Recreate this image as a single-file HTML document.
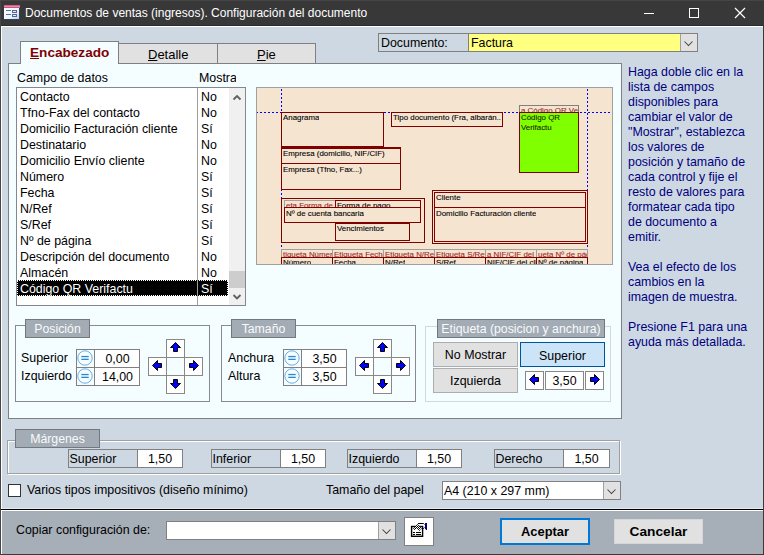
<!DOCTYPE html>
<html><head><meta charset="utf-8">
<style>
*{box-sizing:border-box;margin:0;padding:0}
html,body{width:764px;height:555px;overflow:hidden;background:#3a3a3a}
body{position:relative;font-family:"Liberation Sans",sans-serif;font-size:12.4px;color:#000}
.a{position:absolute}
.t{position:absolute;white-space:nowrap;line-height:16px}
.bx{position:absolute;border:1px solid #808080}
.gl{position:absolute;background:#a3acb5;border:1px solid #72787e;color:#f8fafc;font-size:13px;line-height:16px;text-align:center;white-space:nowrap}
.pt{position:absolute;white-space:nowrap;font-size:7.9px;line-height:10px;color:#000;overflow:hidden;-webkit-text-stroke:0.1px currentColor}
.dv{position:absolute;width:1px;background:repeating-linear-gradient(to bottom,#0000ff 0 2px,transparent 2px 4px)}
.dh{position:absolute;height:1px;background:repeating-linear-gradient(to right,#0000ff 0 2px,transparent 2px 4px)}
</style></head><body>
<div class="a" style="left:0;top:0;width:764px;height:25px;background:#383838"></div>
<div class="a" style="left:0;top:25px;width:764px;height:1px;background:#2a2a2a"></div>
<div class="a" style="left:1px;top:26px;width:762px;height:528px;background:#fff"></div>
<div class="a" style="left:2px;top:27px;width:761px;height:481px;background:#ced8e2"></div>
<div class="a" style="left:2px;top:508px;width:761px;height:1px;background:#e4ecf3"></div>
<div class="a" style="left:1px;top:509px;width:762px;height:1px;background:#000"></div>
<div class="a" style="left:1px;top:510px;width:762px;height:1px;background:#fff"></div>
<div class="a" style="left:2px;top:511px;width:761px;height:43px;background:#a6aeb7"></div>
<svg class="a" style="left:0;top:0" width="24" height="24" viewBox="0 0 24 24"><defs><linearGradient id="ig" x1="0" y1="0" x2="1" y2="1"><stop offset="0" stop-color="#fff"/><stop offset="0.6" stop-color="#eef3fb"/><stop offset="1" stop-color="#b9cbe8"/></linearGradient><linearGradient id="pk" x1="0" y1="0" x2="0" y2="1"><stop offset="0" stop-color="#c84a78"/><stop offset="0.45" stop-color="#e890b0"/><stop offset="1" stop-color="#c0406c"/></linearGradient></defs><rect x="4" y="5" width="16" height="15" fill="url(#ig)"/><rect x="4" y="5" width="16" height="3" fill="url(#pk)"/><rect x="19" y="8" width="1" height="12" fill="#2d4468"/><rect x="4" y="19" width="16" height="1" fill="#2d4468"/><rect x="6" y="10" width="5" height="1" fill="#5873a3"/><rect x="6" y="14" width="5" height="1" fill="#5873a3"/><rect x="12" y="10" width="5" height="3" fill="#53698f"/><rect x="13" y="11" width="3" height="1" fill="#e8eef8"/><rect x="12" y="14" width="5" height="3" fill="#53698f"/><rect x="13" y="15" width="3" height="1" fill="#e8eef8"/></svg>
<div class="a" style="left:0;top:0;width:764px;height:1px;background:#454545"></div>
<div class="a" style="left:0;top:0;width:1px;height:555px;background:#454545"></div>
<div class="t" style="left:25px;top:5px;color:#fff;font-size:12px">Documentos de ventas (ingresos). Configuración del documento</div>
<div class="a" style="left:644px;top:13px;width:10px;height:1px;background:#fff"></div>
<div class="a" style="left:689px;top:8px;width:10px;height:10px;border:1px solid #fff"></div>
<svg class="a" style="left:734px;top:7px" width="12" height="12" viewBox="0 0 12 12"><path d="M1 1L11 11M11 1L1 11" stroke="#fff" stroke-width="1.2"/></svg>
<div class="bx" style="left:378px;top:33px;width:91px;height:19px;background:#ced8e2"></div>
<div class="t" style="left:381px;top:35px">Documento:</div>
<div class="bx" style="left:468px;top:33px;width:230px;height:19px;background:#ffff80"></div>
<div class="t" style="left:471px;top:35px">Factura</div>
<div class="a" style="left:680px;top:34px;width:17px;height:17px;background:#e1e1e1;border-left:1px solid #a0a0a0"></div>
<svg class="a" style="left:683px;top:39px" width="11" height="8" viewBox="0 0 11 8"><path d="M1.5 2.5L5.5 6.5L9.5 2.5" stroke="#404040" stroke-width="1.05" fill="none"/></svg>
<div class="bx" style="left:118px;top:43px;width:100px;height:21px;background:#e1e1e1;border-bottom:0"></div>
<div class="bx" style="left:217px;top:43px;width:99px;height:21px;background:#e1e1e1;border-bottom:0"></div>
<div class="t" style="left:148px;top:47px;font-size:13px"><u>D</u>etalle</div>
<div class="t" style="left:257px;top:47px;font-size:13px"><u>P</u>ie</div>
<div class="bx" style="left:8px;top:63px;width:614px;height:356px;background:#f4fdff"></div>
<div class="bx" style="left:20px;top:41px;width:99px;height:23px;background:#f4fdff;border-bottom:0"></div>
<div class="t" style="left:30px;top:45px;font-size:13.6px;font-weight:bold;color:#800000"><u>E</u>ncabezado</div>
<div class="t" style="left:17px;top:70px">Campo de datos</div>
<div class="t" style="left:199px;top:70px;width:37px;overflow:hidden">Mostrar</div>
<div class="a" style="left:16px;top:87px;width:230px;height:219px;background:#fff;border:1px solid #828790"></div>
<div class="a" style="left:229px;top:88px;width:16px;height:217px;background:#f0f0f0"></div>
<div class="a" style="left:229px;top:271px;width:16px;height:17px;background:#cdcdcd"></div>
<svg class="a" style="left:232px;top:93px" width="10" height="8" viewBox="0 0 10 8"><path d="M1.5 6.5L5 3L8.5 6.5" stroke="#606060" stroke-width="1.8" fill="none"/></svg>
<svg class="a" style="left:232px;top:293px" width="10" height="8" viewBox="0 0 10 8"><path d="M1.5 2L5 5.5L8.5 2" stroke="#606060" stroke-width="1.8" fill="none"/></svg>
<div class="t" style="left:20px;top:89px;color:#000">Contacto</div><div class="t" style="left:201px;top:89px;color:#000">No</div>
<div class="t" style="left:20px;top:105px;color:#000">Tfno-Fax del contacto</div><div class="t" style="left:201px;top:105px;color:#000">No</div>
<div class="t" style="left:20px;top:121px;color:#000">Domicilio Facturación cliente</div><div class="t" style="left:201px;top:121px;color:#000">Sí</div>
<div class="t" style="left:20px;top:137px;color:#000">Destinatario</div><div class="t" style="left:201px;top:137px;color:#000">No</div>
<div class="t" style="left:20px;top:153px;color:#000">Domicilio Envío cliente</div><div class="t" style="left:201px;top:153px;color:#000">No</div>
<div class="t" style="left:20px;top:169px;color:#000">Número</div><div class="t" style="left:201px;top:169px;color:#000">Sí</div>
<div class="t" style="left:20px;top:185px;color:#000">Fecha</div><div class="t" style="left:201px;top:185px;color:#000">Sí</div>
<div class="t" style="left:20px;top:201px;color:#000">N/Ref</div><div class="t" style="left:201px;top:201px;color:#000">Sí</div>
<div class="t" style="left:20px;top:217px;color:#000">S/Ref</div><div class="t" style="left:201px;top:217px;color:#000">Sí</div>
<div class="t" style="left:20px;top:233px;color:#000">Nº de página</div><div class="t" style="left:201px;top:233px;color:#000">Sí</div>
<div class="t" style="left:20px;top:249px;color:#000">Descripción del documento</div><div class="t" style="left:201px;top:249px;color:#000">No</div>
<div class="t" style="left:20px;top:265px;color:#000">Almacén</div><div class="t" style="left:201px;top:265px;color:#000">No</div>
<div class="a" style="left:17px;top:280px;width:211px;height:16px;background:#000;border:1px dotted #fff"></div>
<div class="t" style="left:20px;top:281px;color:#fff">Código QR Verifactu</div><div class="t" style="left:201px;top:281px;color:#fff">Sí</div>
<div class="a" style="left:197px;top:88px;width:1px;height:217px;background:#a0a0a0"></div>
<div class="a" style="left:256px;top:87px;width:357px;height:178px;border:1px solid #a0a0a0;background:#f5e4d0;overflow:hidden">
<div class="a" style="left:-1px;top:-1px;width:357px;height:178px">
<div class="dv" style="left:25px;top:2px;height:178px"></div>
<div class="dv" style="left:331px;top:2px;height:178px"></div>
<div class="dh" style="left:0;top:25px;width:357px"></div>
<div class="a" style="left:25px;top:25px;width:103px;height:35px;border:1px solid #800000;"></div>
<div class="pt" style="left:27px;top:26.299999999999997px;color:#000;">Anagrama</div>
<div class="a" style="left:25px;top:60px;width:120px;height:17px;border:1px solid #800000;"></div>
<div class="a" style="left:25px;top:61px;width:120px;height:1px;background:#800000"></div>
<div class="pt" style="left:27px;top:62px;color:#000;">Empresa (domicilio, NIF/CIF)</div>
<div class="a" style="left:25px;top:76px;width:120px;height:27px;border:1px solid #800000;"></div>
<div class="pt" style="left:27px;top:77.6px;color:#000;">Empresa (Tfno, Fax...)</div>
<div class="a" style="left:135px;top:25px;width:112px;height:15px;border:1px solid #800000;"></div>
<div class="pt" style="left:137px;top:26.400000000000006px;color:#000;width:108px;">Tipo documento (Fra, albarán..</div>
<div class="a" style="left:263px;top:18px;width:60px;height:8px;border:1px solid #808080;"></div>
<div class="a" style="left:264px;top:19px;width:58px;height:6px;overflow:hidden"><div class="pt" style="left:1px;top:0px;color:#a02828">a Código QR Verifactu</div></div>
<div class="a" style="left:263px;top:25px;width:60px;height:61px;border:1px solid #800000;background:#80ff00;"></div>
<div class="pt" style="left:265px;top:26px;color:#1a2a00;">Código QR</div>
<div class="pt" style="left:265px;top:36px;color:#1a2a00;">Verifactu</div>
<div class="a" style="left:25px;top:111px;width:144px;height:45px;border:1px solid #800000;"></div>
<div class="a" style="left:28px;top:113px;width:52px;height:11px;border:1px solid #a0a0a0;"></div>
<div class="a" style="left:29px;top:114px;width:50px;height:6px;overflow:hidden"><div class="pt" style="left:1px;top:-0.5px;color:#a02828">eta Forma de pago</div></div>
<div class="a" style="left:79px;top:113px;width:86px;height:11px;border:1px solid #800000;"></div>
<div class="a" style="left:80px;top:114px;width:84px;height:6px;overflow:hidden"><div class="pt" style="left:1px;top:-0.5px">Forma de pago</div></div>
<div class="a" style="left:28px;top:120px;width:137px;height:16px;background:#f5e4d0;border:1px solid #800000"></div>
<div class="pt" style="left:30px;top:122px;color:#000;">Nº de cuenta bancaria</div>
<div class="a" style="left:79px;top:136px;width:75px;height:18px;border:1px solid #800000;"></div>
<div class="pt" style="left:81px;top:136.5px;color:#000;">Vencimientos</div>
<div class="a" style="left:176px;top:103px;width:156px;height:54px;border:1px solid #800000;"></div>
<div class="a" style="left:178px;top:105px;width:152px;height:50px;border:1px solid #800000;"></div>
<div class="a" style="left:178px;top:120px;width:152px;height:1px;background:#800000"></div>
<div class="pt" style="left:180px;top:105.69999999999999px;color:#000;">Cliente</div>
<div class="pt" style="left:180px;top:121.80000000000001px;color:#000;">Domicilio Facturación cliente</div>
<div class="a" style="left:25px;top:162px;width:52px;height:9px;border:1px solid #a0a0a0;"></div>
<div class="a" style="left:26px;top:163px;width:50px;height:7px;overflow:hidden"><div class="pt" style="left:1px;top:0px;color:#a02828">tiqueta Número</div></div>
<div class="a" style="left:25px;top:170px;width:52px;height:12px;border:1px solid #800000;"></div>
<div class="a" style="left:26px;top:171px;width:50px;height:10px;overflow:hidden"><div class="pt" style="left:1px;top:0px">Número</div></div>
<div class="a" style="left:76px;top:162px;width:52px;height:9px;border:1px solid #a0a0a0;"></div>
<div class="a" style="left:77px;top:163px;width:50px;height:7px;overflow:hidden"><div class="pt" style="left:1px;top:0px;color:#a02828">Etiqueta Fecha</div></div>
<div class="a" style="left:76px;top:170px;width:52px;height:12px;border:1px solid #800000;"></div>
<div class="a" style="left:77px;top:171px;width:50px;height:10px;overflow:hidden"><div class="pt" style="left:1px;top:0px">Fecha</div></div>
<div class="a" style="left:127px;top:162px;width:52px;height:9px;border:1px solid #a0a0a0;"></div>
<div class="a" style="left:128px;top:163px;width:50px;height:7px;overflow:hidden"><div class="pt" style="left:1px;top:0px;color:#a02828">Etiqueta N/Ref</div></div>
<div class="a" style="left:127px;top:170px;width:52px;height:12px;border:1px solid #800000;"></div>
<div class="a" style="left:128px;top:171px;width:50px;height:10px;overflow:hidden"><div class="pt" style="left:1px;top:0px">N/Ref</div></div>
<div class="a" style="left:178px;top:162px;width:52px;height:9px;border:1px solid #a0a0a0;"></div>
<div class="a" style="left:179px;top:163px;width:50px;height:7px;overflow:hidden"><div class="pt" style="left:1px;top:0px;color:#a02828">Etiqueta S/Ref</div></div>
<div class="a" style="left:178px;top:170px;width:52px;height:12px;border:1px solid #800000;"></div>
<div class="a" style="left:179px;top:171px;width:50px;height:10px;overflow:hidden"><div class="pt" style="left:1px;top:0px">S/Ref</div></div>
<div class="a" style="left:229px;top:162px;width:52px;height:9px;border:1px solid #a0a0a0;"></div>
<div class="a" style="left:230px;top:163px;width:50px;height:7px;overflow:hidden"><div class="pt" style="left:1px;top:0px;color:#a02828">a NIF/CIF del cliente</div></div>
<div class="a" style="left:229px;top:170px;width:52px;height:12px;border:1px solid #800000;"></div>
<div class="a" style="left:230px;top:171px;width:50px;height:10px;overflow:hidden"><div class="pt" style="left:1px;top:0px">NIF/CIF del cliente</div></div>
<div class="a" style="left:280px;top:162px;width:52px;height:9px;border:1px solid #a0a0a0;"></div>
<div class="a" style="left:281px;top:163px;width:50px;height:7px;overflow:hidden"><div class="pt" style="left:1px;top:0px;color:#a02828">ueta Nº de página</div></div>
<div class="a" style="left:280px;top:170px;width:52px;height:12px;border:1px solid #800000;"></div>
<div class="a" style="left:281px;top:171px;width:50px;height:10px;overflow:hidden"><div class="pt" style="left:1px;top:0px">Nº de página</div></div>
</div></div>
<div class="a" style="left:628px;top:65px;color:#000080;line-height:15px;white-space:pre">Haga doble clic en la
lista de campos
disponibles para
cambiar el valor de
&quot;Mostrar&quot;, establezca
los valores de
posición y tamaño de
cada control y fije el
resto de valores para
formatear cada tipo
de documento a
emitir.

Vea el efecto de los
cambios en la
imagen de muestra.

Presione F1 para una
ayuda más detallada.</div>
<div class="a" style="left:15px;top:325px;width:195px;height:77px;border:1px solid #8a8a8a"></div>
<div class="gl" style="left:25px;top:319px;width:65px;height:19px;line-height:19px;font-size:12.3px">Posición</div>
<div class="t" style="left:21px;top:350px">Superior</div>
<div class="t" style="left:21px;top:368px">Izquierdo</div>
<div class="a" style="left:76px;top:349px;width:64px;height:37px;border:1px solid #808080;background:#fff"></div><div class="a" style="left:77px;top:350px;width:17px;height:35px;background:#f4fdff"></div><div class="a" style="left:94px;top:349px;width:1px;height:37px;background:#808080"></div><div class="a" style="left:76px;top:367px;width:64px;height:1px;background:#808080"></div><svg class="a" style="left:76px;top:349px" width="18" height="18" viewBox="0 0 18 18"><circle cx="9" cy="9" r="7.2" fill="none" stroke="#6aaee8" stroke-width="1"/><rect x="5.3" y="6.9" width="7.4" height="1.3" fill="#2a88d8"/><rect x="5.3" y="9.7" width="7.4" height="1.3" fill="#2a88d8"/></svg><svg class="a" style="left:76px;top:367px" width="18" height="18" viewBox="0 0 18 18"><circle cx="9" cy="9" r="7.2" fill="none" stroke="#6aaee8" stroke-width="1"/><rect x="5.3" y="6.9" width="7.4" height="1.3" fill="#2a88d8"/><rect x="5.3" y="9.7" width="7.4" height="1.3" fill="#2a88d8"/></svg><div class="t" style="left:95px;top:351px;width:45px;text-align:center">0,00</div><div class="t" style="left:95px;top:369px;width:45px;text-align:center">14,00</div>
<div class="a" style="left:166px;top:339px;width:19px;height:19px;background:#fff;border:1px solid #888"></div><svg class="a" style="left:166px;top:339px" width="19" height="19" viewBox="0 0 19 19"><path d="M9.5 3.5L14.5 8.5L11.5 8.5L11.5 12.5L7.5 12.5L7.5 8.5L4.5 8.5Z" fill="#0000ff" stroke="#000" stroke-width="1"/></svg><div class="a" style="left:148px;top:357px;width:19px;height:19px;background:#fff;border:1px solid #888"></div><svg class="a" style="left:148px;top:357px" width="19" height="19" viewBox="0 0 19 19"><path d="M4.5 8.5L9.5 3.5L9.5 6.5L13.5 6.5L13.5 10.5L9.5 10.5L9.5 13.5Z" fill="#0000ff" stroke="#000" stroke-width="1"/></svg><div class="a" style="left:184px;top:357px;width:19px;height:19px;background:#fff;border:1px solid #888"></div><svg class="a" style="left:184px;top:357px" width="19" height="19" viewBox="0 0 19 19"><path d="M14.5 8.5L9.5 3.5L9.5 6.5L5.5 6.5L5.5 10.5L9.5 10.5L9.5 13.5Z" fill="#0000ff" stroke="#000" stroke-width="1"/></svg><div class="a" style="left:166px;top:375px;width:19px;height:19px;background:#fff;border:1px solid #888"></div><svg class="a" style="left:166px;top:375px" width="19" height="19" viewBox="0 0 19 19"><path d="M7.5 4.5L11.5 4.5L11.5 8.5L14.5 8.5L9.5 13.5L4.5 8.5L7.5 8.5Z" fill="#0000ff" stroke="#000" stroke-width="1"/></svg>
<div class="a" style="left:221px;top:325px;width:195px;height:77px;border:1px solid #8a8a8a"></div>
<div class="gl" style="left:231px;top:319px;width:65px;height:19px;line-height:19px;font-size:12.3px">Tamaño</div>
<div class="t" style="left:228px;top:350px">Anchura</div>
<div class="t" style="left:228px;top:368px">Altura</div>
<div class="a" style="left:283px;top:349px;width:64px;height:37px;border:1px solid #808080;background:#fff"></div><div class="a" style="left:284px;top:350px;width:17px;height:35px;background:#f4fdff"></div><div class="a" style="left:301px;top:349px;width:1px;height:37px;background:#808080"></div><div class="a" style="left:283px;top:367px;width:64px;height:1px;background:#808080"></div><svg class="a" style="left:283px;top:349px" width="18" height="18" viewBox="0 0 18 18"><circle cx="9" cy="9" r="7.2" fill="none" stroke="#6aaee8" stroke-width="1"/><rect x="5.3" y="6.9" width="7.4" height="1.3" fill="#2a88d8"/><rect x="5.3" y="9.7" width="7.4" height="1.3" fill="#2a88d8"/></svg><svg class="a" style="left:283px;top:367px" width="18" height="18" viewBox="0 0 18 18"><circle cx="9" cy="9" r="7.2" fill="none" stroke="#6aaee8" stroke-width="1"/><rect x="5.3" y="6.9" width="7.4" height="1.3" fill="#2a88d8"/><rect x="5.3" y="9.7" width="7.4" height="1.3" fill="#2a88d8"/></svg><div class="t" style="left:302px;top:351px;width:45px;text-align:center">3,50</div><div class="t" style="left:302px;top:369px;width:45px;text-align:center">3,50</div>
<div class="a" style="left:373px;top:339px;width:19px;height:19px;background:#fff;border:1px solid #888"></div><svg class="a" style="left:373px;top:339px" width="19" height="19" viewBox="0 0 19 19"><path d="M9.5 3.5L14.5 8.5L11.5 8.5L11.5 12.5L7.5 12.5L7.5 8.5L4.5 8.5Z" fill="#0000ff" stroke="#000" stroke-width="1"/></svg><div class="a" style="left:355px;top:357px;width:19px;height:19px;background:#fff;border:1px solid #888"></div><svg class="a" style="left:355px;top:357px" width="19" height="19" viewBox="0 0 19 19"><path d="M4.5 8.5L9.5 3.5L9.5 6.5L13.5 6.5L13.5 10.5L9.5 10.5L9.5 13.5Z" fill="#0000ff" stroke="#000" stroke-width="1"/></svg><div class="a" style="left:391px;top:357px;width:19px;height:19px;background:#fff;border:1px solid #888"></div><svg class="a" style="left:391px;top:357px" width="19" height="19" viewBox="0 0 19 19"><path d="M14.5 8.5L9.5 3.5L9.5 6.5L5.5 6.5L5.5 10.5L9.5 10.5L9.5 13.5Z" fill="#0000ff" stroke="#000" stroke-width="1"/></svg><div class="a" style="left:373px;top:375px;width:19px;height:19px;background:#fff;border:1px solid #888"></div><svg class="a" style="left:373px;top:375px" width="19" height="19" viewBox="0 0 19 19"><path d="M7.5 4.5L11.5 4.5L11.5 8.5L14.5 8.5L9.5 13.5L4.5 8.5L7.5 8.5Z" fill="#0000ff" stroke="#000" stroke-width="1"/></svg>
<div class="a" style="left:425px;top:326px;width:186px;height:76px;border:1px solid #d4d8dc"></div>
<div class="gl" style="left:437px;top:319px;width:168px;height:19px;line-height:19px;font-size:12.3px">Etiqueta (posicion y anchura)</div>
<div class="a" style="left:433px;top:342px;width:85px;height:25px;background:#e1e1e1;border:1px solid #adadad"></div>
<div class="t" style="left:433px;top:347px;width:85px;text-align:center">No Mostrar</div>
<div class="a" style="left:520px;top:342px;width:85px;height:25px;background:#cce4f7;border:1px solid #005499"></div>
<div class="t" style="left:520px;top:348px;width:85px;text-align:center">Superior</div>
<div class="a" style="left:433px;top:368px;width:85px;height:25px;background:#e1e1e1;border:1px solid #adadad"></div>
<div class="t" style="left:433px;top:373px;width:85px;text-align:center">Izquierda</div>
<div class="a" style="left:525px;top:371px;width:19px;height:19px;background:#fff;border:1px solid #888"></div><svg class="a" style="left:525px;top:371px" width="19" height="19" viewBox="0 0 19 19"><path d="M4.5 8.5L9.5 3.5L9.5 6.5L13.5 6.5L13.5 10.5L9.5 10.5L9.5 13.5Z" fill="#0000ff" stroke="#000" stroke-width="1"/></svg>
<div class="a" style="left:545px;top:371px;width:39px;height:19px;background:#fff;border:1px solid #888"></div>
<div class="t" style="left:545px;top:373px;width:39px;text-align:center">3,50</div>
<div class="a" style="left:585px;top:371px;width:19px;height:19px;background:#fff;border:1px solid #888"></div><svg class="a" style="left:585px;top:371px" width="19" height="19" viewBox="0 0 19 19"><path d="M14.5 8.5L9.5 3.5L9.5 6.5L5.5 6.5L5.5 10.5L9.5 10.5L9.5 13.5Z" fill="#0000ff" stroke="#000" stroke-width="1"/></svg>
<div class="a" style="left:8px;top:441px;width:613px;height:34px;border:1px solid #fff"></div>
<div class="a" style="left:7px;top:440px;width:613px;height:34px;border:1px solid #a0a0a0"></div>
<div class="gl" style="left:15px;top:429px;width:85px;height:19px;line-height:19px;font-size:12.3px">Márgenes</div>
<div class="a" style="left:68px;top:449px;width:70px;height:19px;border:1px solid #808080;background:#ced8e2"></div><div class="t" style="left:69.5px;top:451px">Superior</div><div class="a" style="left:137px;top:449px;width:46px;height:19px;border:1px solid #808080;background:#fff"></div><div class="t" style="left:137px;top:451px;width:46px;text-align:center">1,50</div>
<div class="a" style="left:211px;top:449px;width:70px;height:19px;border:1px solid #808080;background:#ced8e2"></div><div class="t" style="left:212.5px;top:451px">Inferior</div><div class="a" style="left:280px;top:449px;width:46px;height:19px;border:1px solid #808080;background:#fff"></div><div class="t" style="left:280px;top:451px;width:46px;text-align:center">1,50</div>
<div class="a" style="left:347px;top:449px;width:70px;height:19px;border:1px solid #808080;background:#ced8e2"></div><div class="t" style="left:348.5px;top:451px">Izquierdo</div><div class="a" style="left:416px;top:449px;width:46px;height:19px;border:1px solid #808080;background:#fff"></div><div class="t" style="left:416px;top:451px;width:46px;text-align:center">1,50</div>
<div class="a" style="left:494px;top:449px;width:70px;height:19px;border:1px solid #808080;background:#ced8e2"></div><div class="t" style="left:495.5px;top:451px">Derecho</div><div class="a" style="left:563px;top:449px;width:47px;height:19px;border:1px solid #808080;background:#fff"></div><div class="t" style="left:563px;top:451px;width:47px;text-align:center">1,50</div>
<div class="a" style="left:8px;top:484px;width:13px;height:13px;border:1px solid #333;background:#fff"></div>
<div class="t" style="left:27px;top:482px">Varios tipos impositivos (diseño mínimo)</div>
<div class="t" style="left:326px;top:482px">Tamaño del papel</div>
<div class="a" style="left:442px;top:481px;width:179px;height:19px;border:1px solid #808080;background:#fff"></div>
<div class="t" style="left:444px;top:483px">A4 (210 x 297 mm)</div>
<div class="a" style="left:603px;top:482px;width:17px;height:17px;background:#e1e1e1;border-left:1px solid #a0a0a0"></div>
<svg class="a" style="left:606px;top:487px" width="11" height="8" viewBox="0 0 11 8"><path d="M1.5 2.5L5.5 6.5L9.5 2.5" stroke="#404040" stroke-width="1.05" fill="none"/></svg>
<div class="t" style="left:16px;top:522px">Copiar configuración de:</div>
<div class="a" style="left:166px;top:521px;width:230px;height:19px;border:1px solid #808080;background:#fff"></div>
<div class="a" style="left:378px;top:522px;width:17px;height:17px;background:#e1e1e1;border-left:1px solid #a0a0a0"></div>
<svg class="a" style="left:381px;top:527px" width="11" height="8" viewBox="0 0 11 8"><path d="M1.5 2.5L5.5 6.5L9.5 2.5" stroke="#404040" stroke-width="1.05" fill="none"/></svg>
<div class="a" style="left:404px;top:517px;width:30px;height:29px;border:1px solid #808080;background:#fff"></div>
<svg class="a" style="left:409px;top:520px" width="20" height="20" viewBox="0 0 20 20"><defs><pattern id="ck" width="2" height="2" patternUnits="userSpaceOnUse"><rect width="2" height="2" fill="#fff"/><rect width="1" height="1" fill="#000"/><rect x="1" y="1" width="1" height="1" fill="#000"/></pattern></defs><rect x="2.6" y="6.5" width="11" height="9.8" fill="#fff" stroke="#000" stroke-width="1.4"/><rect x="4" y="12" width="2" height="1" fill="#000"/><rect x="7" y="12" width="5" height="1" fill="#000"/><rect x="4" y="14" width="2" height="1" fill="#000"/><rect x="7" y="14" width="5" height="1" fill="#000"/><path d="M4 8.5L8.5 4L12.5 8L10.5 11L8 8.5L5.5 10Z" fill="url(#ck)"/><path d="M9 3.5H14.5L15.5 4.5M15.5 7.5L14.5 8.5H12.5" stroke="#000" stroke-width="1" fill="none"/><path d="M16 3H18V10H17.2L16 8.5Z" fill="#000080"/></svg>
<div class="a" style="left:500px;top:518px;width:90px;height:27px;border:2px solid #0078d7;background:#e1e1e1"></div>
<div class="t" style="left:500px;top:524px;width:90px;text-align:center;font-weight:bold;font-size:12.9px">Aceptar</div>
<div class="a" style="left:614px;top:519px;width:89px;height:25px;border:1px solid #d6d6d6;background:#e1e1e1"></div>
<div class="t" style="left:614px;top:524px;width:89px;text-align:center;font-weight:bold;font-size:13.7px">Cancelar</div>
</body></html>
